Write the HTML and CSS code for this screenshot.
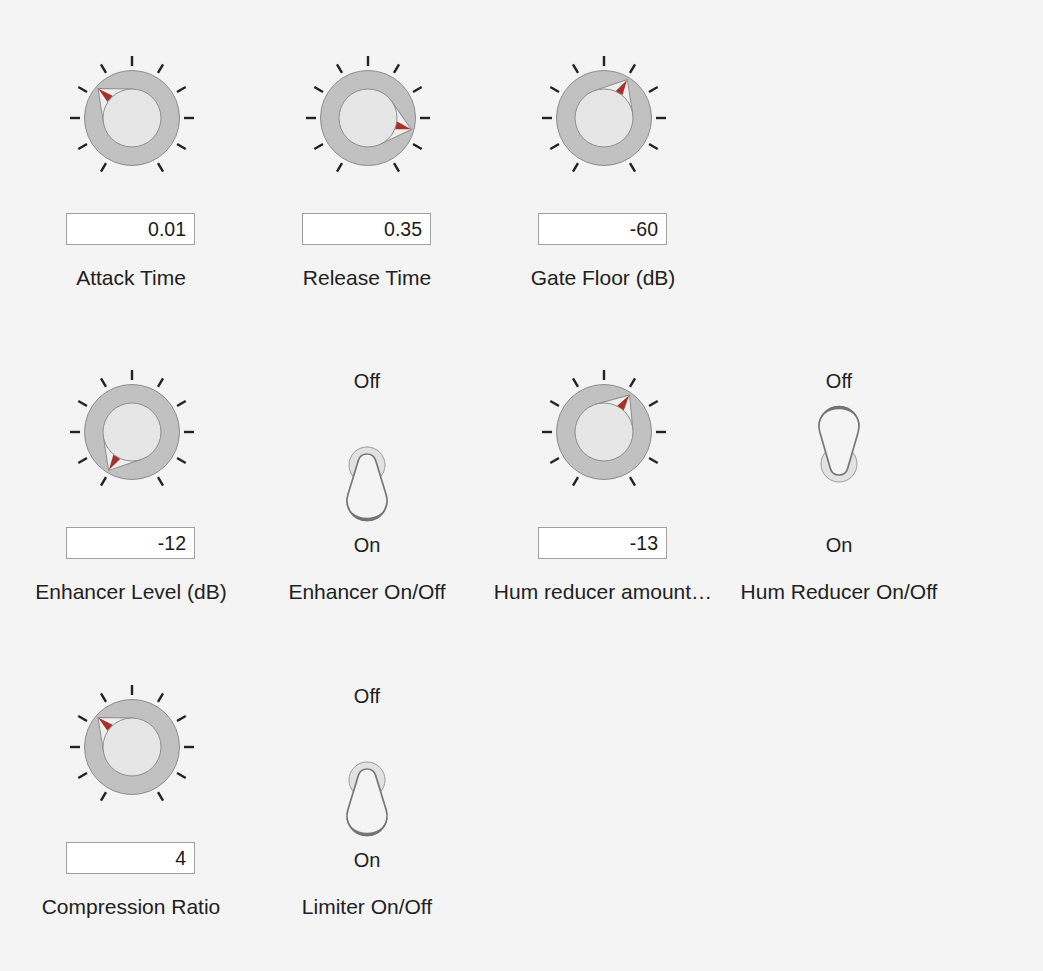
FILE: index.html
```html
<!DOCTYPE html>
<html>
<head>
<meta charset="utf-8">
<link rel="stylesheet" href="styles.css">
</head>
<body>
<svg class="defs" width="0" height="0" aria-hidden="true">
  <defs>
    <g id="knob-base">
      <g class="ticks">
        <line x1="0" y1="-52" x2="0" y2="-62" transform="rotate(-150)"/>
        <line x1="0" y1="-52" x2="0" y2="-62" transform="rotate(-120)"/>
        <line x1="0" y1="-52" x2="0" y2="-62" transform="rotate(-90)"/>
        <line x1="0" y1="-52" x2="0" y2="-62" transform="rotate(-60)"/>
        <line x1="0" y1="-52" x2="0" y2="-62" transform="rotate(-30)"/>
        <line x1="0" y1="-52" x2="0" y2="-62"/>
        <line x1="0" y1="-52" x2="0" y2="-62" transform="rotate(30)"/>
        <line x1="0" y1="-52" x2="0" y2="-62" transform="rotate(60)"/>
        <line x1="0" y1="-52" x2="0" y2="-62" transform="rotate(90)"/>
        <line x1="0" y1="-52" x2="0" y2="-62" transform="rotate(120)"/>
        <line x1="0" y1="-52" x2="0" y2="-62" transform="rotate(150)"/>
      </g>
      <circle class="knob-outer" cx="0" cy="0" r="47.5"/>
    </g>
    <path id="knob-wedge" class="knob-wedge" d="M0 -45 L22.17 -18.69 L-22.17 -18.69 Z"/>
    <circle id="knob-inner" class="knob-inner" cx="0" cy="0" r="29"/>
    <path id="knob-red" class="knob-red" d="M0 -44.5 L4 -29.2 L-4 -29.2 Z"/>
  </defs>
</svg>

<div class="panel">
  <!-- Row 1 -->
  <div class="cell">
    <div class="widget">
      <svg class="knob" viewBox="-65 -65 130 130" width="130" height="130">
        <use href="#knob-base"/>
        <g transform="rotate(-49)"><use href="#knob-wedge"/></g>
        <use href="#knob-inner"/>
        <g transform="rotate(-49)"><use href="#knob-red"/></g>
      </svg>
      <div class="field">0.01</div>
    </div>
    <div class="label">Attack Time</div>
  </div>
  <div class="cell">
    <div class="widget">
      <svg class="knob" viewBox="-65 -65 130 130" width="130" height="130">
        <use href="#knob-base"/>
        <g transform="rotate(104.8)"><use href="#knob-wedge"/></g>
        <use href="#knob-inner"/>
        <g transform="rotate(104.8)"><use href="#knob-red"/></g>
      </svg>
      <div class="field">0.35</div>
    </div>
    <div class="label">Release Time</div>
  </div>
  <div class="cell">
    <div class="widget">
      <svg class="knob" viewBox="-65 -65 130 130" width="130" height="130">
        <use href="#knob-base"/>
        <g transform="rotate(31.2)"><use href="#knob-wedge"/></g>
        <use href="#knob-inner"/>
        <g transform="rotate(31.2)"><use href="#knob-red"/></g>
      </svg>
      <div class="field">-60</div>
    </div>
    <div class="label">Gate Floor (dB)</div>
  </div>
  <div class="cell"></div>

  <!-- Row 2 -->
  <div class="cell">
    <div class="widget">
      <svg class="knob" viewBox="-65 -65 130 130" width="130" height="130">
        <use href="#knob-base"/>
        <g transform="rotate(-148.6)"><use href="#knob-wedge"/></g>
        <use href="#knob-inner"/>
        <g transform="rotate(-148.6)"><use href="#knob-red"/></g>
      </svg>
      <div class="field">-12</div>
    </div>
    <div class="label">Enhancer Level (dB)</div>
  </div>
  <div class="cell">
    <div class="widget switch-widget">
      <div class="state state-top">Off</div>
      <svg class="switch" viewBox="-40 -65 80 130" width="80" height="130">
        <circle class="switch-ring" cx="0" cy="0" r="18"/>
        <g transform="scale(1,-1)">
          <path class="lever" d="M8.6 4.64 L19.12 -29.63 A20 20 0 1 0 -19.12 -29.63 L-8.6 4.64 A9 9 0 0 0 8.6 4.64 Z"/>
          <path class="lever-edge" d="M-20.7 -35.5 A20.7 20.7 0 0 1 20.7 -35.5 A20.7 17.3 0 0 0 -20.7 -35.5 Z"/>
        </g>
      </svg>
      <div class="state state-bottom">On</div>
    </div>
    <div class="label">Enhancer On/Off</div>
  </div>
  <div class="cell">
    <div class="widget">
      <svg class="knob" viewBox="-65 -65 130 130" width="130" height="130">
        <use href="#knob-base"/>
        <g transform="rotate(34.5)"><use href="#knob-wedge"/></g>
        <use href="#knob-inner"/>
        <g transform="rotate(34.5)"><use href="#knob-red"/></g>
      </svg>
      <div class="field">-13</div>
    </div>
    <div class="label">Hum reducer amount…</div>
  </div>
  <div class="cell">
    <div class="widget switch-widget">
      <div class="state state-top">Off</div>
      <svg class="switch" viewBox="-40 -65 80 130" width="80" height="130">
        <circle class="switch-ring" cx="0" cy="-1" r="18"/>
        <path class="lever" d="M8.64 3.51 L19.21 -32.93 A20 20 0 1 0 -19.21 -32.93 L-8.64 3.51 A9 9 0 0 0 8.64 3.51 Z"/>
        <path class="lever-edge" d="M-20.7 -38.5 A20.7 20.7 0 0 1 20.7 -38.5 A20.7 17.3 0 0 0 -20.7 -38.5 Z"/>
      </svg>
      <div class="state state-bottom">On</div>
    </div>
    <div class="label">Hum Reducer On/Off</div>
  </div>

  <!-- Row 3 -->
  <div class="cell">
    <div class="widget">
      <svg class="knob" viewBox="-65 -65 130 130" width="130" height="130">
        <use href="#knob-base"/>
        <g transform="rotate(-49)"><use href="#knob-wedge"/></g>
        <use href="#knob-inner"/>
        <g transform="rotate(-49)"><use href="#knob-red"/></g>
      </svg>
      <div class="field">4</div>
    </div>
    <div class="label">Compression Ratio</div>
  </div>
  <div class="cell">
    <div class="widget switch-widget">
      <div class="state state-top">Off</div>
      <svg class="switch" viewBox="-40 -65 80 130" width="80" height="130">
        <circle class="switch-ring" cx="0" cy="0" r="18"/>
        <g transform="scale(1,-1)">
          <path class="lever" d="M8.6 4.64 L19.12 -29.63 A20 20 0 1 0 -19.12 -29.63 L-8.6 4.64 A9 9 0 0 0 8.6 4.64 Z"/>
          <path class="lever-edge" d="M-20.7 -35.5 A20.7 20.7 0 0 1 20.7 -35.5 A20.7 17.3 0 0 0 -20.7 -35.5 Z"/>
        </g>
      </svg>
      <div class="state state-bottom">On</div>
    </div>
    <div class="label">Limiter On/Off</div>
  </div>
  <div class="cell"></div>
  <div class="cell"></div>
</div>
</body>
</html>
```

FILE: styles.css
```css
html, body {
  margin: 0;
  padding: 0;
  background: #f4f4f4;
}

body {
  width: 1043px;
  height: 971px;
  overflow: hidden;
  font-family: "Liberation Sans", Arial, sans-serif;
  color: #212121;
}

.defs {
  position: absolute;
  width: 0;
  height: 0;
  overflow: hidden;
}

.panel {
  display: grid;
  grid-template-columns: repeat(4, 236px);
  grid-auto-rows: 314.8px;
  padding: 52.5px 0 0 13px;
}

.cell {
  display: flex;
  flex-direction: column;
  align-items: center;
}

.widget {
  height: 192px;
  display: flex;
  flex-direction: column;
  align-items: center;
}

.knob {
  display: block;
  flex: none;
  margin-left: 1px;
}

.ticks line {
  stroke: #222222;
  stroke-width: 2.4;
}

.knob-outer {
  fill: #c1c1c1;
  stroke: #8e8e8e;
  stroke-width: 1;
}

.knob-wedge {
  fill: #eeeeee;
  stroke: #8e8e8e;
  stroke-width: 1;
  stroke-linejoin: miter;
}

.knob-inner {
  fill: #e6e6e6;
  stroke: #8e8e8e;
  stroke-width: 1;
}

.knob-red {
  fill: #a5332b;
}

.field {
  margin-top: 30px;
  margin-right: 1px;
  box-sizing: border-box;
  width: 129px;
  height: 32px;
  border: 1px solid #a0a0a0;
  background: #ffffff;
  font-size: 19.5px;
  line-height: 30px;
  text-align: right;
  padding-right: 8px;
  color: #1a1a1a;
}

.label {
  margin-top: 20px;
  width: 224px;
  font-size: 21px;
  line-height: 26px;
  text-align: center;
  white-space: nowrap;
}

.state {
  font-size: 20px;
  line-height: 26px;
}

.state-top {
  margin-top: 1px;
}

.switch {
  display: block;
  flex: none;
  margin-top: 5.5px;
}

.state-bottom {
  margin-top: 2.7px;
}

.switch-ring {
  fill: #e2e2e2;
  stroke: #9c9c9c;
  stroke-width: 1;
}

.lever {
  fill: #f4f4f4;
  stroke: #777777;
  stroke-width: 1.7;
  stroke-linejoin: round;
}

.lever-edge {
  fill: #747474;
}
```
